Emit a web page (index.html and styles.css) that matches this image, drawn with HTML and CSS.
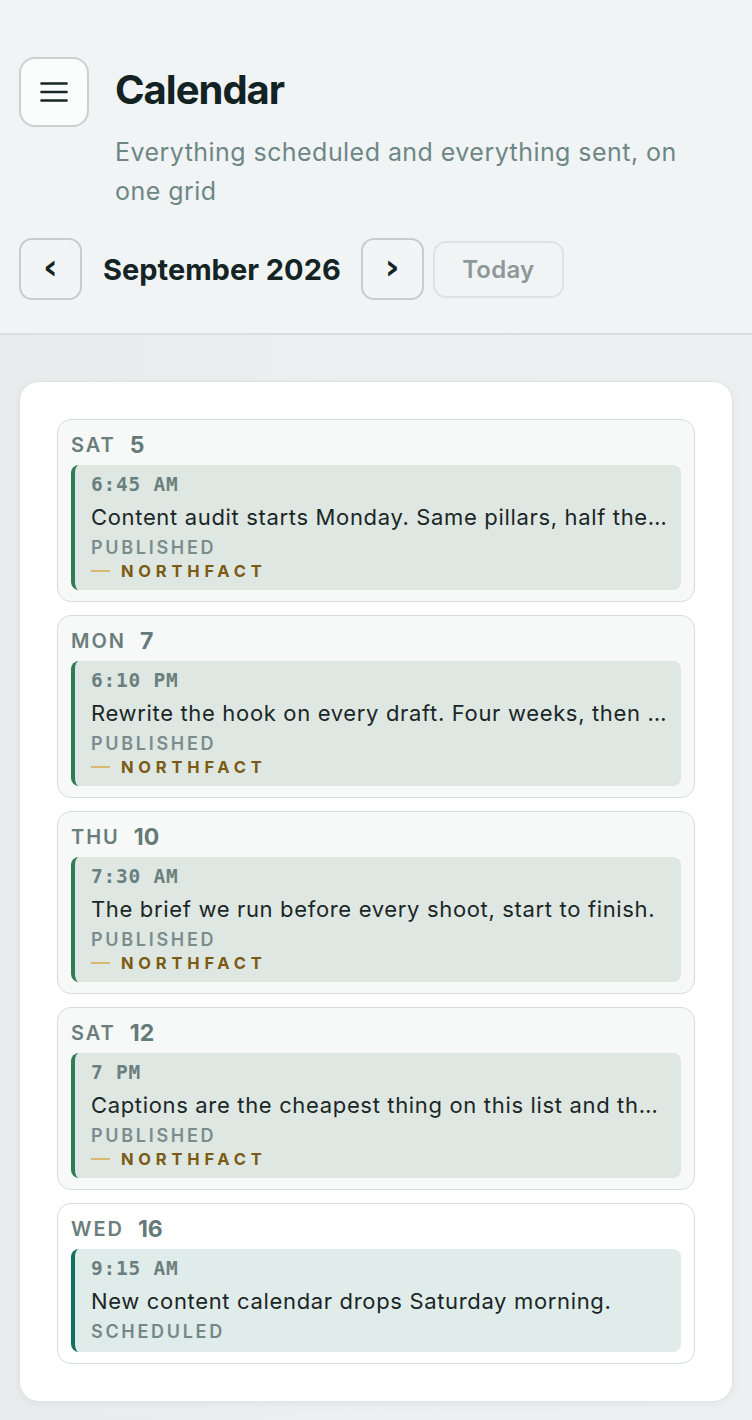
FILE: index.html
```html
<!DOCTYPE html>
<html lang="en">
<head>
<meta charset="utf-8">
<title>Calendar</title>
<link rel="stylesheet" href="styles.css">
</head>
<body>
<header class="header">
  <div class="top">
    <button class="menu-btn" aria-label="Menu">
      <svg width="28" height="20" viewBox="0 0 28 20" fill="none" stroke="#172626" stroke-width="2.6" stroke-linecap="round">
        <line x1="1.5" y1="1.5" x2="26.5" y2="1.5"/>
        <line x1="1.5" y1="10" x2="26.5" y2="10"/>
        <line x1="1.5" y1="18.5" x2="26.5" y2="18.5"/>
      </svg>
    </button>
    <div class="titles">
      <h1 class="title">Calendar</h1>
      <p class="subtitle">Everything scheduled and everything sent, on one grid</p>
    </div>
  </div>
  <div class="nav">
    <button class="nav-btn" aria-label="Previous month">‹</button>
    <div class="month">September 2026</div>
    <button class="nav-btn" aria-label="Next month">›</button>
    <button class="today-btn">Today</button>
  </div>
</header>

<main class="panel">
  <section class="day">
    <div class="day-label"><span class="dow">SAT</span><span class="dnum">5</span></div>
    <div class="event published">
      <div class="time">6:45 AM</div>
      <div class="ev-title">Content audit starts Monday. Same pillars, half the posts, twice the reach.</div>
      <div class="status">PUBLISHED</div>
      <div class="brand"><span class="dash"></span>NORTHFACT</div>
    </div>
  </section>

  <section class="day">
    <div class="day-label"><span class="dow">MON</span><span class="dnum">7</span></div>
    <div class="event published">
      <div class="time">6:10 PM</div>
      <div class="ev-title">Rewrite the hook on every draft. Four weeks, then we compare.</div>
      <div class="status">PUBLISHED</div>
      <div class="brand"><span class="dash"></span>NORTHFACT</div>
    </div>
  </section>

  <section class="day">
    <div class="day-label"><span class="dow">THU</span><span class="dnum">10</span></div>
    <div class="event published">
      <div class="time">7:30 AM</div>
      <div class="ev-title">The brief we run before every shoot, start to finish.</div>
      <div class="status">PUBLISHED</div>
      <div class="brand"><span class="dash"></span>NORTHFACT</div>
    </div>
  </section>

  <section class="day">
    <div class="day-label"><span class="dow">SAT</span><span class="dnum">12</span></div>
    <div class="event published">
      <div class="time">7 PM</div>
      <div class="ev-title">Captions are the cheapest thing on this list and the most skipped.</div>
      <div class="status">PUBLISHED</div>
      <div class="brand"><span class="dash"></span>NORTHFACT</div>
    </div>
  </section>

  <section class="day day-upcoming">
    <div class="day-label"><span class="dow">WED</span><span class="dnum">16</span></div>
    <div class="event scheduled">
      <div class="time">9:15 AM</div>
      <div class="ev-title">New content calendar drops Saturday morning.</div>
      <div class="status">SCHEDULED</div>
    </div>
  </section>
</main>
</body>
</html>
```

FILE: styles.css
```css
* { box-sizing: border-box; }

html, body {
  margin: 0;
  padding: 0;
}

body {
  font-family: Inter, "Noto Sans", "Liberation Sans", sans-serif;
  background: linear-gradient(90deg, #e8ecec 0%, #eceff0 40%, #edf0f0 100%);
  color: #142424;
  min-height: 1420px;
}

.header {
  background: #f1f4f4;
  padding: 57px 19px 33px;
  border-bottom: 2px solid #d9dfde;
}

.top {
  display: flex;
  align-items: flex-start;
  gap: 26px;
}

.menu-btn {
  flex: none;
  width: 70px;
  height: 70px;
  border-radius: 16px;
  border: 2px solid #c9d2d0;
  background: #fbfcfc;
  display: flex;
  align-items: center;
  justify-content: center;
  padding: 0;
}

.titles {
  flex: 1;
  min-width: 0;
}

.title {
  margin: 0;
  font-size: 40px;
  line-height: 66px;
  font-weight: 700;
  letter-spacing: -0.025em;
  color: #132323;
}

.subtitle {
  margin: 10px 0 0;
  max-width: 600px;
  font-size: 25px;
  line-height: 39px;
  letter-spacing: 0.018em;
  color: #6e8786;
  font-weight: 400;
}

.nav {
  margin-top: 27px;
  display: flex;
  align-items: center;
  gap: 9px;
}

.nav-btn {
  width: 63px;
  height: 62px;
  border-radius: 13px;
  border: 2px solid #c4cecc;
  background: #f2f5f5;
  color: #142424;
  font-family: "DejaVu Sans", sans-serif;
  font-size: 36px;
  font-weight: 700;
  line-height: 1;
  padding: 0 0 5px;
  display: flex;
  align-items: center;
  justify-content: center;
}

.month {
  padding: 0 11px 0 12px;
  font-size: 29px;
  font-weight: 700;
  letter-spacing: 0;
  color: #142424;
  white-space: nowrap;
}

.today-btn {
  width: 131px;
  height: 57px;
  border-radius: 13px;
  border: 2px solid #dde3e2;
  background: #f1f4f4;
  color: #8d9998;
  font-family: Inter, sans-serif;
  font-size: 24px;
  font-weight: 600;
  letter-spacing: 0.01em;
  padding: 0;
}

.panel {
  margin: 46px 19px 18px;
  background: #ffffff;
  border: 1px solid #dee4e3;
  border-radius: 20px;
  padding: 37px;
  box-shadow: 0 2px 8px rgba(20, 40, 40, 0.05);
  display: flex;
  flex-direction: column;
  gap: 13px;
}

.day {
  background: #f7f8f8;
  border: 1.5px solid #d5dddc;
  border-radius: 14px;
  padding: 11.5px 13px 11.5px;
}

.day-upcoming {
  background: #ffffff;
}

.day-label {
  height: 26px;
  display: flex;
  align-items: center;
  gap: 14px;
  color: #6a7e7d;
}

.dow {
  font-size: 20px;
  font-weight: 600;
  letter-spacing: 0.1em;
}

.dnum {
  font-size: 23px;
  font-weight: 700;
  color: #647a79;
}

.event {
  margin-top: 7px;
  border-radius: 8px;
  border-left: 4px solid #2e7b56;
  background: #dee7e2;
  padding: 8px 14px 8px 16px;
}

.event.scheduled {
  border-left-color: #12705f;
  background: #e0ecea;
}

.time {
  font-family: "DejaVu Sans Mono", "Liberation Mono", monospace;
  font-weight: 700;
  font-size: 19.5px;
  line-height: 24px;
  letter-spacing: 0.04em;
  color: #6c7f7f;
}

.ev-title {
  margin-top: 4px;
  font-size: 22px;
  line-height: 32px;
  letter-spacing: 0.03em;
  color: #1b2626;
  white-space: nowrap;
  overflow: hidden;
  text-overflow: ellipsis;
}

.status {
  margin-top: 3px;
  font-size: 18px;
  line-height: 24px;
  font-weight: 600;
  letter-spacing: 0.15em;
  color: #7b8c8d;
}

.event.scheduled .status {
  color: #758887;
}

.brand {
  height: 22px;
  display: flex;
  align-items: center;
  font-size: 16.5px;
  font-weight: 700;
  letter-spacing: 0.29em;
  color: #7c5b14;
}

.dash {
  display: inline-block;
  width: 19px;
  height: 2px;
  background: #dcb86c;
  margin-right: 11px;
}
```
